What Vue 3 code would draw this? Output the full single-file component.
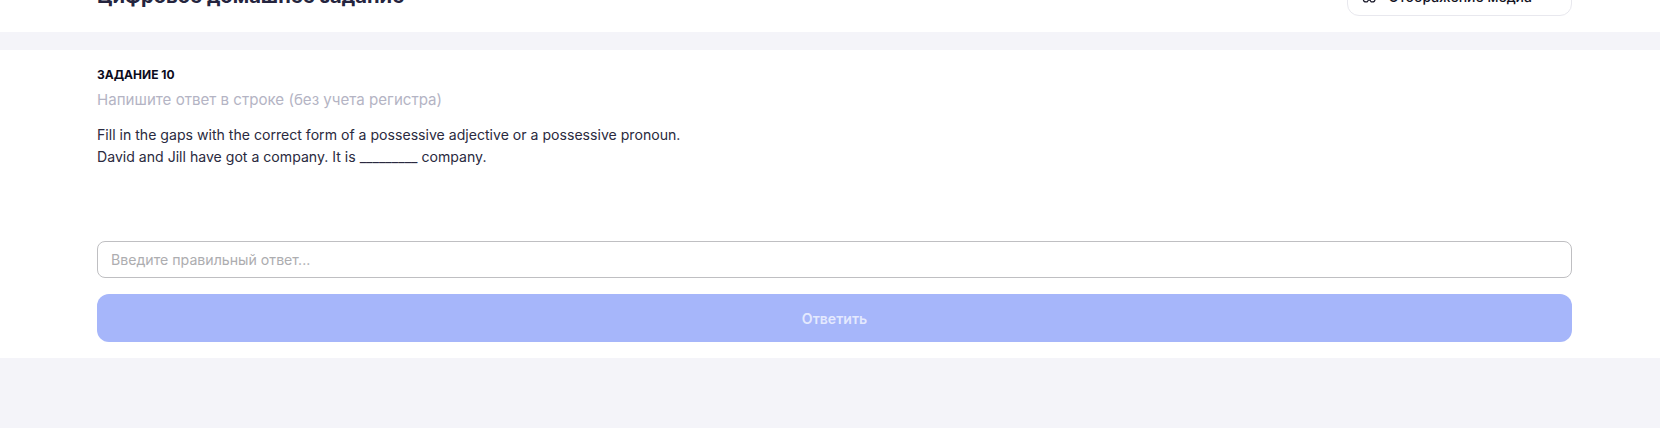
<script setup>
const task = {
  title: 'ЗАДАНИЕ 10',
  hint: 'Напишите ответ в строке (без учета регистра)',
  lines: [
    'Fill in the gaps with the correct form of a possessive adjective or a possessive pronoun.',
    'David and Jill have got a company. It is _________ company.',
  ],
}
</script>

<template>
  <div class="page">
    <div class="scroll">
      <header class="top">
        <h1 class="page-title">Цифровое домашнее задание</h1>
        <button class="media-btn" type="button">
          <svg class="media-icon" width="18" height="18" viewBox="0 0 16 16" fill="none" stroke="#1b1b2b" stroke-width="1.4">
            <path d="M1.5 3.5h13v7a3 3 0 0 1-3 3 2.2 2.2 0 0 1-1.9-1l-.6-1H7l-.6 1a2.2 2.2 0 0 1-1.9 1 3 3 0 0 1-3-3z" />
          </svg>
          <span class="media-label">Отображение медиа</span>
          <svg class="chev" width="12" height="12" viewBox="0 0 12 12" fill="none" stroke="#b5b5c3" stroke-width="1.5">
            <path d="M2 4l4 4 4-4" />
          </svg>
        </button>
      </header>

      <section class="panel">
        <div class="task-title">{{ task.title }}</div>
        <div class="task-hint">{{ task.hint }}</div>
        <div class="task-text">
          <p v-for="line in task.lines" :key="line">{{ line }}</p>
        </div>
        <input class="answer" type="text" placeholder="Введите правильный ответ..." />
        <button class="submit" type="button">Ответить</button>
      </section>
    </div>
  </div>
</template>

<style>
html,
body {
  margin: 0;
  background: #f4f4f9;
  overflow: hidden;
}
</style>

<style scoped>
.page {
  width: 1660px;
  height: 428px;
  overflow: hidden;
  background: #f4f4f9;
  font-family: Inter, "Noto Sans", sans-serif;
}

/* page is scrolled down a bit in the screenshot */
.scroll {
  margin-top: -32px;
}

.top {
  height: 64px;
  padding: 0 88px 0 97px;
  box-sizing: border-box;
  background: #fff;
  display: flex;
  align-items: flex-start;
  justify-content: space-between;
}

.page-title {
  margin: 16px 0 0;
  font-size: 20.2px;
  line-height: 24px;
  font-weight: 700;
  color: #24243e;
}

.media-btn {
  height: 37px;
  width: 225px;
  margin-top: 11px;
  padding: 0 15px 2px 14px;
  box-sizing: border-box;
  display: flex;
  align-items: center;
  gap: 12px;
  background: #fff;
  border: 1px solid #e8e8ee;
  border-radius: 12px;
  font: 500 14px Inter, sans-serif;
  color: #12121f;
}

.media-label {
  white-space: nowrap;
}

.chev {
  margin-left: auto;
  flex-shrink: 0;
}

.panel {
  margin-top: 18px;
  height: 308px;
  box-sizing: border-box;
  padding: 16px 88px 16px 97px;
  background: #fff;
  display: flex;
  flex-direction: column;
}

.task-title {
  font-size: 12px;
  line-height: 18px;
  font-weight: 700;
  color: #0c0c1d;
}

.task-hint {
  margin-top: 6px;
  font-size: 15.1px;
  line-height: 20px;
  color: #b4b4c4;
}

.task-text {
  margin-top: 14px;
  font-size: 14.1px;
  line-height: 22px;
  font-weight: 400;
  color: #2a2a40;
}

.task-text p {
  margin: 0;
}

.answer {
  margin-top: auto;
  height: 37px;
  box-sizing: border-box;
  padding: 0 13px;
  border: 1px solid #bfbfc2;
  border-radius: 8px;
  background: #fff;
  font: 400 14.15px Inter, sans-serif;
  outline: none;
}

.answer::placeholder {
  color: #adadb0;
}

.submit {
  margin-top: 16px;
  height: 48px;
  border: 0;
  border-radius: 12px;
  background: #a6b6fa;
  color: #e4e9fe;
  font: 600 14.1px Inter, sans-serif;
}
</style>
